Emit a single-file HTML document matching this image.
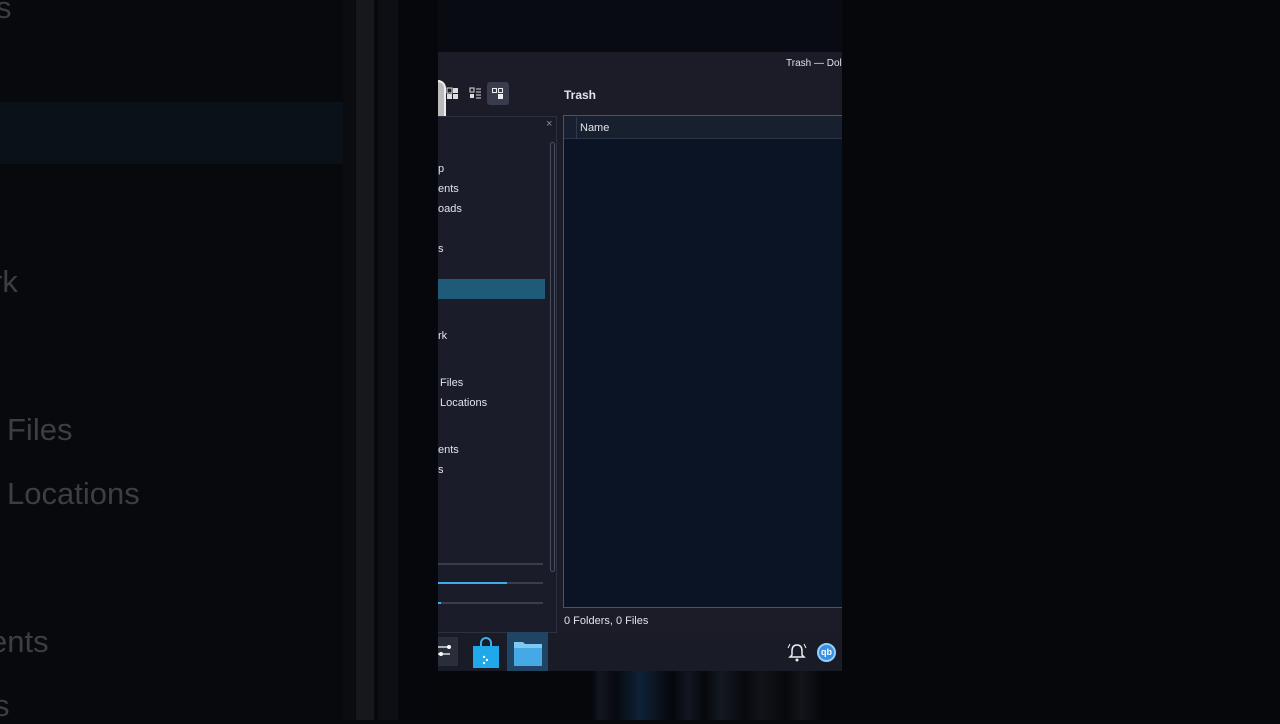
<!DOCTYPE html>
<html><head><meta charset="utf-8"><style>
*{margin:0;padding:0;box-sizing:border-box}
body{width:1280px;height:720px;overflow:hidden;background:#07090d;font-family:"Liberation Sans",sans-serif;position:relative}
.a{position:absolute}
.bt{color:#3b3e44;font-size:31px;position:absolute;white-space:nowrap}
.st{color:#dfe3ea;font-size:11px;position:absolute;white-space:nowrap}
</style></head><body>
<!-- blurred left -->
<div class="a" style="left:0;top:102px;width:343px;height:62px;background:#0b1119"></div>
<div class="bt" style="left:-4px;top:-10px">s</div>
<div class="bt" style="left:-14px;top:166px">r</div>
<div class="bt" style="left:-8px;top:264px">rk</div>
<div class="bt" style="left:7px;top:412px">Files</div>
<div class="bt" style="left:7px;top:476px">Locations</div>
<div class="bt" style="left:-10px;top:624px">ents</div>
<div class="bt" style="left:-6px;top:688px">s</div>
<div class="a" style="left:343px;top:0;width:12px;height:720px;background:#0a0c10"></div>
<div class="a" style="left:356px;top:0;width:18px;height:720px;background:#16181c"></div>
<div class="a" style="left:378px;top:0;width:20px;height:720px;background:#0d0f14"></div>
<div class="a" style="left:398px;top:0;width:40px;height:720px;background:#05070c"></div>
<!-- window area -->
<div class="a" style="left:438px;top:0;width:404px;height:52px;background:#090b12"></div>
<div class="a" style="left:438px;top:52px;width:404px;height:64px;background:#1b1c28"></div>
<div class="st" style="left:786px;top:58px;font-size:10px">Trash — Dolph</div>
<div class="a" style="left:438px;top:80px;width:8px;height:48px;border-radius:0 24px 24px 0;background:#bbb;border:2px solid #eee;border-left:none"></div>
<svg class="a" style="left:446px;top:86px" width="64" height="18" viewBox="0 0 64 18">
<rect x="1" y="2" width="5" height="5" fill="none" stroke="#ddd"/><rect x="7" y="2" width="5" height="5" fill="#ddd"/><rect x="1" y="8" width="5" height="5" fill="#ddd"/><rect x="7" y="8" width="5" height="5" fill="#ddd"/>
<rect x="24" y="2" width="4" height="4" fill="none" stroke="#ddd"/><rect x="24" y="8" width="4" height="4" fill="#ddd"/><path d="M30 3h5M30 6h5M30 9h5M30 12h5" stroke="#ddd"/>
</svg>
<div class="a" style="left:487px;top:82px;width:22px;height:23px;background:#393c4c;border-radius:3px"></div>
<svg class="a" style="left:492px;top:88px" width="12" height="12"><rect x="0.5" y="0.5" width="4" height="4" fill="none" stroke="#eee"/><rect x="6.5" y="0.5" width="4" height="4" fill="none" stroke="#eee"/><rect x="6" y="6" width="5" height="5" fill="#eee"/></svg>
<div class="st" style="left:564px;top:88px;font-size:12px;font-weight:bold">Trash</div>
<!-- sidebar -->
<div class="a" style="left:438px;top:116px;width:119px;height:517px;background:#1a1d29;border:1px solid #2c3040;border-left:none"></div>
<div class="st" style="left:546px;top:118px;color:#8a8e99">×</div>
<div class="a" style="left:550px;top:142px;width:5px;height:430px;border:1px solid #4a4e5c;border-radius:3px"></div>
<div class="st" style="left:438px;top:163px">p</div>
<div class="st" style="left:438px;top:183px">ents</div>
<div class="st" style="left:438px;top:203px">oads</div>
<div class="st" style="left:438px;top:243px">s</div>
<div class="a" style="left:438px;top:279px;width:107px;height:20px;background:#1f5a78"></div>
<div class="st" style="left:438px;top:330px">rk</div>
<div class="st" style="left:440px;top:377px">Files</div>
<div class="st" style="left:440px;top:397px">Locations</div>
<div class="st" style="left:438px;top:444px">ents</div>
<div class="st" style="left:438px;top:464px">s</div>
<div class="a" style="left:438px;top:563px;width:105px;height:2px;background:#3a3e4a"></div>
<div class="a" style="left:438px;top:582px;width:105px;height:2px;background:#3a3e4a"></div>
<div class="a" style="left:438px;top:582px;width:69px;height:2px;background:#3daee9"></div>
<div class="a" style="left:438px;top:602px;width:105px;height:2px;background:#3a3e4a"></div>
<div class="a" style="left:438px;top:602px;width:3px;height:2px;background:#3daee9"></div>
<!-- main -->
<div class="a" style="left:557px;top:116px;width:285px;height:517px;background:#1b1c28"></div>
<div class="a" style="left:563px;top:115px;width:279px;height:493px;background:#0b1424;border:1px solid #3c5874;border-right:none"></div>
<div class="a" style="left:564px;top:116px;width:278px;height:23px;background:#182030;border-bottom:1px solid #2a3548"></div>
<div class="a" style="left:576px;top:117px;width:1px;height:22px;background:#2e3a4e"></div>
<div class="st" style="left:580px;top:122px">Name</div>
<div class="st" style="left:564px;top:615px">0 Folders, 0 Files</div>
<!-- taskbar -->
<div class="a" style="left:438px;top:633px;width:404px;height:38px;background:#191c27"></div>
<div class="a" style="left:438px;top:637px;width:20px;height:29px;background:#2a2e3a"></div>
<svg class="a" style="left:438px;top:643px" width="16" height="16"><path d="M0 4h12M0 11h12" stroke="#ddd" stroke-width="1.5"/><circle cx="11" cy="4" r="2" fill="#fff"/><circle cx="3" cy="11" r="2" fill="#fff"/></svg>
<svg class="a" style="left:472px;top:637px" width="28" height="32"><path d="M9 9V6a5 5 0 0 1 10 0v3" fill="none" stroke="#3daee9" stroke-width="2"/><rect x="1" y="9" width="26" height="22" fill="#1fa8ea"/><circle cx="12" cy="20" r="1.2" fill="#fff"/><circle cx="15" cy="23" r="1.2" fill="#fff"/><circle cx="12" cy="26" r="1.2" fill="#fff"/></svg>
<div class="a" style="left:507px;top:632px;width:41px;height:39px;background:#1f4464"></div>
<svg class="a" style="left:513px;top:639px" width="30" height="28"><path d="M1 3h9l2 2h17v22H1z" fill="#7fc8f0"/><rect x="1" y="9" width="28" height="18" fill="#44a9e6"/></svg>
<svg class="a" style="left:787px;top:642px" width="20" height="20"><path d="M10 3c-4 0-5 3-5 6v4l-2 2h14l-2-2V9c0-3-1-6-5-6z" fill="none" stroke="#eee" stroke-width="1.5"/><circle cx="10" cy="18" r="1.5" fill="#eee"/><path d="M3 2l-2 4M17 2l2 4" stroke="#eee"/></svg>
<div class="a" style="left:817px;top:643px;width:19px;height:19px;border-radius:50%;background:#3b8fe0;border:2px solid #8fd0ff;color:#fff;font-size:9px;text-align:center;line-height:15px;font-weight:bold">qb</div>
<!-- bottom stripes -->
<div class="a" style="left:438px;top:671px;width:404px;height:49px;background:linear-gradient(90deg,#05070b 0%,#05070b 38%,#12161e 40%,#070a0f 44%,#0d2236 50%,#0b1420 54%,#05070b 58%,#121620 62%,#06080c 66%,#141821 70%,#07090d 76%,#111419 80%,#06080c 86%,#12151b 90%,#05070b 95%)"></div>
<div class="a" style="left:842px;top:0;width:438px;height:720px;background:#05070b"></div>
</body></html>
